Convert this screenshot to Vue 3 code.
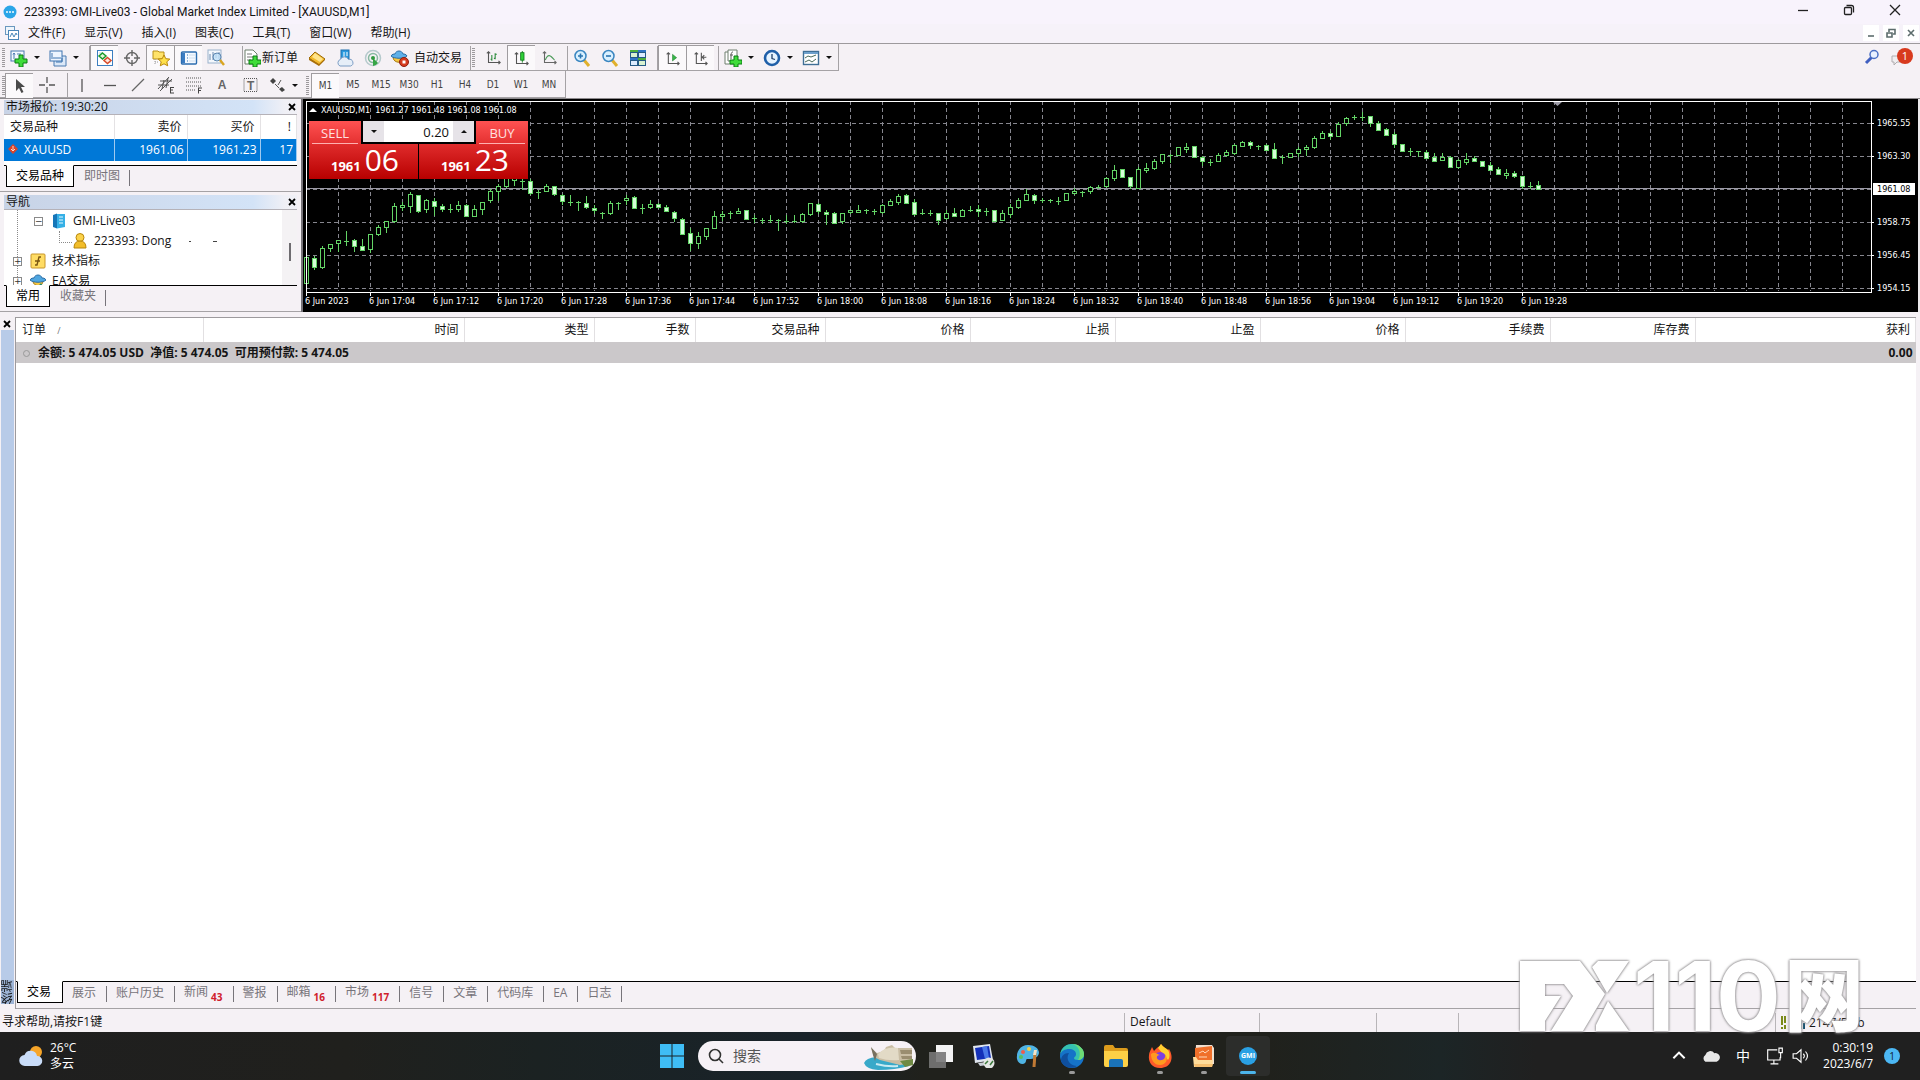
<script setup>
const icons = {
  newChart: '<rect x="1" y="2" width="13" height="10" fill="#f4f8ff" stroke="#4a7ab0"/><path d="M4 4v6M3 5.500l1-1.500 1 1.500M7 5h4" stroke="#4a7ab0" fill="none"/><path d="M9 6h4v4h4v4h-4v4H9v-4H5v-4h4z" fill="#3fdc3a" stroke="#0b7d12"/>',
  profiles: '<path d="M5 7h12v10H5z" fill="#dbe8f8" stroke="#4a7ab0"/><rect x="1" y="2" width="12" height="10" fill="#eef5ff" stroke="#3f74b0"/><path d="M2 9h10M3 4v4M7 13h6v-4" stroke="#3f74b0" fill="none"/>',
  market: '<rect x="1.500" y="1.500" width="15" height="15" fill="#fff" stroke="#3c7fc0"/><path d="M3 4h3M11 13h4" stroke="#b7cfe6"/><path d="M6.500 4l3.500 3-3.500 3L3 7z" fill="#dff5d8" stroke="#1c9a2a" stroke-width="1.500"/><path d="M11.500 8.500l3.500 3-3.500 3-3.500-3z" fill="#ffe6dc" stroke="#d84a2a" stroke-width="1.500"/>',
  crosshair: '<circle cx="9" cy="9" r="5.500" fill="none" stroke="#666" stroke-width="1.400"/><path d="M9 1v6M9 11v6M1 9h6M11 9h6" stroke="#666" stroke-width="1.400"/>',
  favorites: '<path d="M1 4V2h5l1 1h5v7H1z" fill="#ffe36a" stroke="#b8901a"/><path d="M3 10v6M3 13h4" stroke="#9a9a9a" stroke-dasharray="1 1"/><path d="M12 6l1.800 3.700 4 .4-3 2.700.9 4-3.700-2-3.700 2 .9-4-3-2.700 4-.4z" fill="#ffe14a" stroke="#b8860b"/>',
  navigator: '<rect x="1.500" y="3" width="15" height="12" rx="1" fill="#f4f9ff" stroke="#2c6db0" stroke-width="1.400"/><path d="M2 4h3v10H2z" fill="#3a7cc2"/><path d="M7 6h1M7 9h1M7 12h1" stroke="#2c6db0"/><path d="M9 6h6M9 9h6M9 12h6" stroke="#cfe0f0"/>',
  tester: '<rect x="1" y="1" width="13" height="13" fill="#f4f8fd" stroke="#9ab2cc"/><path d="M3 11V5M6 11V3M9 9V4M12 10V3" stroke="#6f8db0"/><circle cx="10" cy="8" r="4" fill="#bfe0f7" fill-opacity=".8" stroke="#5c86b0"/><path d="M13 11l4 5" stroke="#d9a520" stroke-width="2.400"/>',
  order: '<path d="M2 1h8l4 4v10H2z" fill="#fff" stroke="#6b7f6b"/><path d="M4 5h5M4 8h6M4 11h4" stroke="#777"/><path d="M10 7h4v4h4v4h-4v3h-4v-3H6v-4h4z" fill="#3fdc3a" stroke="#0b7d12"/>',
  gold: '<path d="M1 9L7 3l10 7-6 6z" fill="#f2b92d" stroke="#9a6a08"/><path d="M1 9v2l10 6 6-6v-1l-6 5z" fill="#a96f0a"/><path d="M7 4l8 6-3 3-8-5z" fill="#ffe48a"/>',
  cloud: '<rect x="5" y="1" width="8" height="9" fill="#2a9be0" stroke="#1f6fae"/><path d="M8 3v5M10 4h2M10 6h2" stroke="#fff"/><path d="M4 17a3.500 3.500 0 01.3-6.500 4.500 4.500 0 018.200 0A3.300 3.300 0 0114.500 17z" fill="#e6eef8" stroke="#7b9cc4"/>',
  signal: '<circle cx="9" cy="9" r="7.500" fill="none" stroke="#b5c9cc" stroke-width="1.500"/><circle cx="9" cy="9" r="4.500" fill="none" stroke="#86b8a0" stroke-width="1.500"/><path d="M9 9v8a8 8 0 005-3z" fill="#35a545"/><circle cx="9" cy="9" r="2" fill="#2f9a3f"/>',
  autotrade: '<path d="M2 8c0 7 12 7 12 0z" fill="#f6c742" stroke="#a87b14"/><path d="M0 7c3 3 13 3 16 0-1-2-3-2-4-2-1-4-7-4-8 0-1 0-3 0-4 2z" fill="#5fb0e8" stroke="#2a6da6"/><circle cx="13" cy="13" r="4.500" fill="#d63a1e" stroke="#8e1f10"/><rect x="11.500" y="11.500" width="3" height="3" fill="#fff"/>',
  bars: '<path d="M3 2v13h14M1 4l2-2 2 2M15 13l2 2-2 2" fill="none" stroke="#555" stroke-width="1.300"/><path d="M7 6v7M5.500 11H7M11 4v7M11 5h2M9.500 10H11" stroke="#2a8a3a" stroke-width="1.300"/>',
  candles: '<path d="M3 2v13h14M1 4l2-2 2 2M15 13l2 2-2 2" fill="none" stroke="#555" stroke-width="1.300"/><path d="M10 0v14" stroke="#0d7a18"/><rect x="8" y="2" width="4" height="9" fill="#2fd037" stroke="#0d7a18"/>',
  line: '<path d="M3 2v13h14M1 4l2-2 2 2M15 13l2 2-2 2" fill="none" stroke="#666" stroke-width="1.300"/><path d="M4 12c3-8 6-6 11 0" fill="none" stroke="#4a9a58" stroke-width="1.300"/>',
  zoomIn: '<path d="M11 11l5 6" stroke="#e0b02c" stroke-width="3"/><circle cx="7.500" cy="7" r="5.500" fill="#d9f0ff" stroke="#3a86c0" stroke-width="1.500"/><path d="M5 7h5M7.500 4.500v5" stroke="#2a74b0" stroke-width="1.600"/>',
  zoomOut: '<path d="M11 11l5 6" stroke="#e0b02c" stroke-width="3"/><circle cx="7.500" cy="7" r="5.500" fill="#d9f0ff" stroke="#3a86c0" stroke-width="1.500"/><path d="M5 7h5" stroke="#2a74b0" stroke-width="1.600"/>',
  tiles: '<path d="M1 1h16v16H1z" fill="#245a86"/><path d="M2 4h6v4H2zM10 12h6v4h-6z" fill="#d9f2d0"/><path d="M10 4h6v4h-6zM2 12h6v4H2z" fill="#dcecff"/><path d="M1 1h8v2H1zM9 9h8v2H9z" fill="#4cae3c"/><path d="M9 1h8v2H9zM1 9h8v2H1z" fill="#2f74c4"/>',
  autoscroll: '<path d="M4 2v13h13M2 4l2-2 2 2M15 13l2 2-2 2" fill="none" stroke="#555" stroke-width="1.300"/><path d="M9 4l5 4-5 4z" fill="#37b648" stroke="#1c7a2a" stroke-width=".6"/>',
  shift: '<path d="M4 2v13h13M2 4l2-2 2 2M15 13l2 2-2 2" fill="none" stroke="#555" stroke-width="1.300"/><path d="M10 2v10M16 7.500h-5M13.500 5l-2.500 2.500 2.500 2.500" fill="none" stroke="#555" stroke-width="1.300"/>',
  indicators: '<path d="M1 3h10v12H1z" fill="#fff" stroke="#6f7f6f"/><path d="M4 1h9v11H4z" fill="#fff" stroke="#6f7f6f"/><path d="M9 3c-2 0-2 2-2 7M6 6h3" stroke="#555" fill="none"/><path d="M10 7h4v4h4v4h-4v3h-4v-3H6v-4h4z" fill="#3fdc3a" stroke="#0b7d12"/>',
  clock: '<circle cx="9" cy="9" r="7" fill="#e6f3ff" stroke="#1f5fa8" stroke-width="2.600"/><path d="M9 5v4.500l3 1" fill="none" stroke="#1f3f68" stroke-width="1.300"/>',
  template: '<rect x="1.500" y="2.500" width="15" height="13" fill="#fff" stroke="#3f6f96" stroke-width="1.400"/><path d="M2 4h14" stroke="#6ea0cc" stroke-width="2"/><path d="M3 9l3-2 3 1 5-2M3 13l4-2 3 2 4-3" fill="none" stroke="#4a6a5a"/>',
  cursor: '<path d="M5 2v12l3-3 2.500 5 2-1-2.500-5h4z" fill="#4a4a4a"/>',
  cross: '<path d="M9 1v6M9 11v6M1 9h6M11 9h6" stroke="#555" stroke-width="1.300"/>',
  vline: '<path d="M9 3v13" stroke="#555" stroke-width="1.300"/>',
  hline: '<path d="M3 9.500h12" stroke="#555" stroke-width="1.300"/>',
  trend: '<path d="M3 15L15 3" stroke="#666" stroke-width="1.300"/>',
  channel: '<path d="M1 13L12 1M3 15L15 3M1 9h11M3 5h12M5 13l2-9M9 12l2-10" stroke="#555"/><path d="M13 11.500h4M13 14h3M13 17h4M13.500 11v6" stroke="#444"/>',
  fibo: '<path d="M1 2h15M1 6h15M1 10h15M1 14h9" stroke="#555" stroke-dasharray="1 1"/><path d="M13 12h4M13 14.500h3M13.500 12v5.500" stroke="#444"/>',
  labelBox: '<rect x="3" y="2.500" width="13" height="13" fill="none" stroke="#555" stroke-dasharray="1 1"/>',
  arrows: '<path d="M1 5l3-3 3 3-3 3z" fill="#444"/><path d="M6 8l4 4M12 4L9 9" stroke="#555"/><path d="M10 13l3-2 3 3-3 2z" fill="#444"/>',
}

const tools1 = [
  { icon: 'newChart', drop: true, t: '新图表' }, { icon: 'profiles', drop: true, t: '配置文件' }, { sep: 4 },
  { icon: 'market', on: true, t: '市场报价' }, { icon: 'crosshair', t: '数据窗口' }, { icon: 'favorites', on: true, t: '导航' },
  { icon: 'navigator', on: true, t: '终端' }, { icon: 'tester', t: '策略测试' }, { sep: 3 },
  { icon: 'order', label: '新订单', t: '新订单' }, { icon: 'gold', t: 'MetaEditor' }, { icon: 'cloud', t: '虚拟主机' }, { icon: 'signal', t: '信号' },
  { icon: 'autotrade', label: '自动交易', wide: true, t: '自动交易' }, { sep: 2 }, { grip: true },
  { icon: 'bars', small: true, t: '柱状图' }, { icon: 'candles', small: true, on: true, t: '阴阳烛' }, { icon: 'line', small: true, t: '折线图' }, { sep: 1 },
  { icon: 'zoomIn', t: '放大' }, { icon: 'zoomOut', t: '缩小' }, { icon: 'tiles', t: '平铺' }, { sep: 2 },
  { icon: 'autoscroll', small: true, on: true, t: '自动滚动' }, { icon: 'shift', small: true, on: true, t: '图表平移' }, { sep: 1 },
  { icon: 'indicators', drop: true, t: '指标' }, { icon: 'clock', drop: true, t: '周期' }, { icon: 'template', drop: true, t: '模板' },
]
const tools2 = [
  { icon: 'cursor', on: true, t: '光标' }, { icon: 'cross', t: '十字线' }, { sep: 4 },
  { icon: 'vline', t: '垂直线' }, { icon: 'hline', t: '水平线' }, { icon: 'trend', t: '趋势线' }, { icon: 'channel', t: '通道' },
  { icon: 'fibo', t: '斐波那契' }, { text: 'A', t: '文字' }, { icon: 'labelBox', text: 'T', t: '文字标签' }, { icon: 'arrows', drop: true, t: '箭头' }, { grip: true },
]
const frames = ['M1', 'M5', 'M15', 'M30', 'H1', 'H4', 'D1', 'W1', 'MN']
const menus = ['文件(F)', '显示(V)', '插入(I)', '图表(C)', '工具(T)', '窗口(W)', '帮助(H)']

const prices = ['1965.55', '1963.30', '', '1958.75', '1956.45', '1954.15']
const times = ['2023', '17:04', '17:12', '17:20', '17:28', '17:36', '17:44', '17:52', '18:00', '18:08', '18:16', '18:24', '18:32', '18:40', '18:48', '18:56', '19:04', '19:12', '19:20', '19:28']

// kind, body top, body bottom, high, low - in thirds of a pixel
const series = `h478,555,478,563 f481,508,475,515 h451,508,445,512 h439,451,439,463 h427,436,427,463 d428,428,398,443 f427,443,422,463 f445,457,422,460 h409,454,409,466 h388,409,382,415
h370,388,370,405 h325,370,314,376 h322,328,312,340 h287,323,283,346 f290,338,290,346 h307,334,302,346 f308,325,300,355 f325,333,317,342 d334,334,317,345 h322,334,308,342
f322,355,317,358 h334,355,322,358 h313,334,313,350 h280,307,272,315 h265,280,258,308 h240,265,230,270 h220,245,215,263 d248,248,240,275 f250,284,244,290 d281,281,276,303
h265,279,258,281 f265,289,263,293 f290,310,287,320 d312,312,290,323 d313,313,308,338 f316,328,294,332 f331,337,322,349 d344,344,342,362 h316,346,308,352 d315,315,312,335
h300,307,292,322 f298,331,295,334 d329,329,319,347 h319,328,307,332 f319,327,315,332 f328,340,322,342 f343,360,340,373 f362,407,360,412 f406,436,390,460 h415,436,402,454
h391,415,391,427 h355,391,338,392 h349,355,338,370 d346,346,338,364 h338,346,331,348 f337,362,335,364 d360,360,352,375 d366,366,360,378 d367,367,350,375 d367,367,362,398
d369,369,352,378 d370,370,350,375 h349,370,346,374 h316,349,316,353 f317,340,314,347 f342,349,337,381 f346,374,343,377 h346,370,346,377 h337,343,335,348 h335,341,322,346
d337,337,334,348 d340,340,334,350 h322,341,317,349 h310,322,302,324 h295,313,287,320 f292,314,288,318 f313,347,302,353 d345,345,332,352 d346,346,336,354 f346,365,344,380
h346,361,336,366 f346,353,330,354 h337,355,332,357 d337,337,324,342 f332,338,320,358 d339,339,330,354 f337,368,337,368 h346,367,335,368 h328,349,318,361 h307,328,300,333
h289,307,273,308 f290,305,288,318 d305,305,300,315 d307,307,302,315 d308,308,297,320 h286,305,284,308 h280,286,270,292 d282,282,280,297 h268,280,264,289 d268,268,262,274
h241,265,236,270 h217,241,200,250 f214,238,212,240 f238,265,236,274 h214,269,206,272 h211,216,195,224 h190,211,182,215 h169,190,169,197 d171,171,169,195 h148,170,146,175
h146,152,134,165 f145,178,143,180 f176,190,174,203 d191,191,183,204 h172,190,166,193 h163,170,155,177 h142,166,138,172 h133,143,130,146 f133,142,130,152 d143,143,142,155
f142,155,138,158 f154,179,134,182 d178,178,172,198 h166,178,166,180 h154,166,148,177 h146,154,142,175 h121,146,115,154 h106,121,100,123 f106,115,100,125 h77,113,73,116
h61,76,57,83 d57,57,50,66 d56,56,42,68 f55,76,55,86 f76,95,70,99 f94,112,90,114 f109,139,102,150 f139,158,137,160 d160,160,150,175 d160,160,158,176
f163,179,157,183 f178,188,166,190 h178,185,166,187 f177,206,175,208 h187,208,183,214 h182,191,166,201 f181,188,175,192 f190,203,190,206 f202,217,193,220 f214,229,206,232
h226,231,214,243 f226,235,220,239 f235,265,233,272 d263,263,252,272 f262,272,250,274`
const candles = series.split(/\s+/).map((s, i) => {
  const [t, b, h, l] = s.slice(1).split(',').map((v) => Math.round(v / 3))
  return { kind: s[0], x: 3 + i * 8, t, b: Math.max(b, t + 1), h, l }
})
const gridX = Array.from({ length: 48 }, (_, i) => 35 + i * 32)
const gridY = [25, 58, 91, 124, 157, 190]

const columns = [
  ['时间', 261], ['类型', 130], ['手数', 101], ['交易品种', 130], ['价格', 145], ['止损', 145],
  ['止盈', 145], ['价格', 145], ['手续费', 145], ['库存费', 145], ['获利', null],
]
const tabs = [
  ['交易'], ['展示'], ['账户历史'], ['新闻', 43], ['警报'], ['邮箱', 16], ['市场', 117], ['信号'], ['文章'], ['代码库'], ['EA'], ['日志'],
]

const apps = [
  { name: '任务视图', art: '<rect x="7" y="1" width="17" height="17" fill="#fff" fill-opacity=".95"/><rect x="0" y="8" width="17" height="16" fill="#777" fill-opacity=".9"/>' },
  { name: '远程桌面', art: '<path d="M1 2l17-2 3 16-18 3z" fill="#dfe5ee"/><path d="M3 4l14-2 2 12-14 2z" fill="#1430b8"/><path d="M10 3l5-1 2 12-4 1z" fill="#4a78e8"/><path d="M6 19l9-1 1 3-8 1z" fill="#c9ced6"/><circle cx="17" cy="19" r="5.500" fill="#e4e6e4"/><path d="M13 20l3-3M21 17l-3 4" stroke="#3c7a3c" stroke-width="1.500"/>' },
  { name: '画图', art: '<path d="M12 1C4 1 0 8 1 15c1 5 6 6 8 4 2-2 0-4 3-4s10 0 11-6c0-5-5-8-11-8z" fill="#4fb4e4"/><circle cx="7" cy="8" r="2" fill="#f05a4a"/><circle cx="13" cy="5" r="2" fill="#f7cf46"/><circle cx="5" cy="13" r="2" fill="#58c05a"/><path d="M19 9l-1 14" stroke="#c07a34" stroke-width="3"/><path d="M18 6l3 0-1 5h-3z" fill="#f2e3c8"/>' },
  { name: 'Edge', dot: true, art: '<circle cx="12" cy="12" r="12" fill="#1573c8"/><path d="M0 11C1 3 7 0 12 0c7 0 12 5 12 10 0 4-3 6-6 6-3 0-4-1-4-2s2-1 2-4c0-3-3-5-7-5-4 0-8 2-9 6z" fill="#35c1b0"/><path d="M12 0c7 0 12 5 12 10 0 4-3 6-6 6 3-4 3-14-6-16z" fill="#6edb74"/><path d="M9 9c-4 6 1 13 8 13-6 4-14 1-16-5 0-5 3-8 8-8z" fill="#0f4f9e"/>' },
  { name: '文件资源管理器', art: '<path d="M0 3q0-2 2-2h7l2 3h11q2 0 2 2v4H0z" fill="#dd9c1c"/><path d="M0 7h24v14q0 2-2 2H2q-2 0-2-2z" fill="#fdd046"/><path d="M5 23v-6q0-2 2-2h10q2 0 2 2v6z" fill="#1a73b8"/>' },
  { name: 'Firefox', dot: true, art: '<path d="M12 24C4 24 0 18 1 11c0-3 2-5 3-8l2 4c2-2 3-4 6-5l1-2c2 3 5 4 7 6l1-1c3 5 3 9 2 12-2 5-6 7-11 7z" fill="#ff5a2a"/><path d="M13 0c2 3 5 4 7 6 2 3 2 8 0 10L10 4z" fill="#ffcf2f"/><circle cx="12" cy="14" r="6" fill="#7b3fe0"/><path d="M3 10c4-3 6 0 9 1-4 0-4 4-1 5 4 1 7-2 6-6 4 5 1 11-5 11S3 16 3 10z" fill="#ff9a1f"/>' },
  { name: '文档', dot: true, art: '<path d="M4 1h16l2 3v16H3z" fill="#f0e0d0"/><path d="M3 4l17-2v16H3z" fill="#f0702a"/><path d="M7 9l4-2 2 2 4-3M7 13h8" stroke="#ffd8b8" fill="none"/><path d="M1 13h3l2 3h15l-1 7H2z" fill="#ffdc9a"/><path d="M2 20h19l-1 3H3z" fill="#f7c070"/>' },
]
</script>

<template>
  <div class="desk">
    <header class="title">
      <svg class="logo" viewBox="0 0 14 14"><circle cx="7" cy="7" r="6.500" fill="#2aa5e8" /><path d="M3 7h8" stroke="#bfe6fa" stroke-width="2" stroke-dasharray="2 1" /></svg>
      <h1>223393: GMI-Live03 - Global Market Index Limited - [XAUUSD,M1]</h1>
      <div class="win">
        <button aria-label="最小化"><svg viewBox="0 0 12 12"><path d="M1 6.500h10" /></svg></button>
        <button aria-label="还原"><svg viewBox="0 0 12 12"><rect x="1.500" y="3.500" width="7" height="7" rx="1" /><path d="M3.500 1.500h5q2 0 2 2v5" /></svg></button>
        <button aria-label="关闭"><svg viewBox="0 0 12 12"><path d="M1 1l10 10M11 1L1 11" /></svg></button>
      </div>
    </header>

    <nav class="menu">
      <svg class="logo" viewBox="0 0 14 14"><rect x=".5" y=".5" width="9" height="8" fill="#eef5fc" stroke="#6a97bf" /><rect x="3.500" y="4.500" width="10" height="9" fill="#fff" stroke="#4a86b8" /><path d="M5 11l2-4 2 4 2-4 1 2" fill="none" stroke="#4a86b8" /></svg>
      <button v-for="m in menus" :key="m">{{ m }}</button>
      <div class="mdi">
        <button aria-label="最小化图表"><svg viewBox="0 0 10 10"><path d="M2 8h6" /></svg></button>
        <button aria-label="还原图表"><svg viewBox="0 0 10 10"><path d="M1 5h5v4H1zM3 4V1.500h6V6H7" /></svg></button>
        <button aria-label="关闭图表"><svg viewBox="0 0 10 10"><path d="M2 2l6 6M8 2L2 8" /></svg></button>
      </div>
    </nav>

    <div class="bars">
      <div class="bar">
        <i class="grip"></i>
        <template v-for="(b, i) in tools1" :key="i">
          <i v-if="b.grip" class="grip"></i>
          <i v-else-if="b.sep" class="sep" :class="'s' + b.sep"></i>
          <button v-else class="tool" :class="{ on: b.on, drop: b.drop, label: b.label, wide: b.wide, small: b.small }" :aria-label="b.t">
            <svg viewBox="0 0 18 18" v-html="icons[b.icon]"></svg><span v-if="b.label">{{ b.label }}</span><i v-if="b.drop" class="caret"></i>
          </button>
        </template>
      </div>
      <div class="bar second">
        <i class="grip"></i>
        <template v-for="(b, i) in tools2" :key="i">
          <i v-if="b.grip" class="grip inner"></i>
          <i v-else-if="b.sep" class="sep" :class="'s' + b.sep"></i>
          <button v-else class="tool" :class="{ on: b.on, drop: b.drop }" :aria-label="b.t">
            <svg v-if="b.icon" viewBox="0 0 18 18" v-html="icons[b.icon]"></svg><b v-if="b.text" :class="{ over: b.icon }">{{ b.text }}</b><i v-if="b.drop" class="caret"></i>
          </button>
        </template>
        <button v-for="(f, i) in frames" :key="f" class="tool frame" :class="{ on: i === 0 }">{{ f }}</button>
      </div>
      <div class="corner">
        <svg viewBox="0 0 16 16"><path d="M8 8l-6 6" stroke="#3f5fc0" stroke-width="3" /><circle cx="10" cy="5.500" r="4" fill="#e9f1ff" stroke="#4a6fc4" stroke-width="1.500" /></svg>
        <span class="chat"><svg viewBox="0 0 16 16"><path d="M1 7h9v6H6l-3 3v-3H1z" fill="#f0eef0" stroke="#b0adb0" /></svg><em>1</em></span>
      </div>
    </div>

    <main class="work">
      <aside class="side">
        <section class="panel quotes">
          <h2>市场报价: 19:30:20 <button aria-label="关闭市场报价"><svg viewBox="0 0 8 8"><path d="M1 1l6 6M7 1L1 7" /></svg></button></h2>
          <table>
            <colgroup><col style="width: 110px"><col style="width: 73px"><col style="width: 73px"><col></colgroup>
            <thead><tr><th>交易品种</th><th>卖价</th><th>买价</th><th>!</th></tr></thead>
            <tbody><tr><td><svg viewBox="0 0 10 10"><path d="M5 0l5 5-5 5-5-5z" fill="#d8442a" /><path d="M5 2v5M3 5l2 2 2-2" stroke="#ffd8c8" fill="none" /></svg>XAUUSD</td><td>1961.06</td><td>1961.23</td><td>17</td></tr></tbody>
          </table>
          <div class="tabs"><button class="active">交易品种</button><button>即时图</button></div>
        </section>
        <section class="panel navi">
          <h2>导航 <button aria-label="关闭导航"><svg viewBox="0 0 8 8"><path d="M1 1l6 6M7 1L1 7" /></svg></button></h2>
          <div class="treebox">
            <ul class="tree">
              <li class="l2"><i class="exp">−</i><svg viewBox="0 0 16 16"><path d="M2 2l4-1.500v15L2 14z" fill="#1676b8" /><path d="M6 1h8v13l-8 1.500z" fill="#35b0e6" /><path d="M8 4h4M8 7h4M8 10h4" stroke="#e4f6ff" /></svg>GMI-Live03</li>
              <li class="l3"><svg viewBox="0 0 16 16"><circle cx="8" cy="4.500" r="4" fill="#fbd24a" stroke="#b8860b" /><path d="M2 15q0-7 6-7t6 7z" fill="#f2bd2a" stroke="#b8860b" /></svg>223393: Dong<i class="speck"></i><i class="speck low"></i></li>
              <li class="l1"><i class="exp">+</i><svg viewBox="0 0 16 16"><rect x="1" y="1" width="14" height="14" rx="1" fill="#ffdc64" stroke="#c8962a" /><path d="M11 4H9L7 12H5M5 8h5" fill="none" stroke="#7a5510" stroke-width="1.400" /></svg>技术指标</li>
              <li class="l1"><i class="exp">+</i><svg viewBox="0 0 16 16"><path d="M3 8c0 6 10 6 10 0z" fill="#f6c742" stroke="#a87b14" /><path d="M0 7c3 3 13 3 16 0-1-2-3-2-4-2-1-4-7-4-8 0-1 0-3 0-4 2z" fill="#4fa6e0" stroke="#2a6da6" /><path d="M10 11l4 4" stroke="#2a8a6a" stroke-width="2" /></svg>EA交易</li>
            </ul>
            <div class="scroll"><i></i></div>
          </div>
          <div class="tabs"><button class="active">常用</button><button>收藏夹</button></div>
        </section>
      </aside>

      <section class="chart">
        <div class="plot">
          <svg class="canvas">
            <g stroke="#86868e" stroke-dasharray="4 3" shape-rendering="crispEdges">
              <line v-for="x in gridX" :key="x" :x1="x + 0.5" y1="3" :x2="x + 0.5" y2="193" />
              <line v-for="y in gridY" :key="y" x1="3" :y1="y + 0.5" x2="100%" :y2="y + 0.5" />
            </g>
            <path d="M3 90.500H4000" stroke="#9c9aa6" shape-rendering="crispEdges" />
            <g stroke="#63d466" shape-rendering="crispEdges">
              <template v-for="c in candles" :key="c.x">
                <line :x1="c.x + 0.5" :y1="c.h" :x2="c.x + 0.5" :y2="c.l" />
                <rect v-if="c.kind !== 'd'" :x="c.x - 1.5" :y="c.t + 0.5" width="4" :height="c.b - c.t" :fill="c.kind === 'f' ? '#d6ffd8' : '#000'" />
                <line v-else :x1="c.x - 2" :y1="c.t + 0.5" :x2="c.x + 3" :y2="c.t + 0.5" />
              </template>
            </g>
            <path d="M1250 4h9l-4.500 4z" fill="#9c9aa6" />
          </svg>
          <p class="ohlc"><i></i>XAUUSD,M1&nbsp; 1961.27 1961.48 1961.08 1961.08</p>
          <div class="deal">
            <button class="act sell">SELL</button>
            <div class="lots">
              <button aria-label="减少"><i class="caret"></i></button><input value="0.20" aria-label="手数"><button aria-label="增加"><i class="caret up"></i></button>
            </div>
            <button class="act buy">BUY</button>
            <button class="quote"><b>1961</b><span>06</span></button>
            <button class="quote"><b>1961</b><span>23</span></button>
          </div>
        </div>
        <div class="scale">
          <span v-for="(p, i) in prices" :key="i" :class="{ now: !p }">{{ p || '1961.08' }}</span>
        </div>
        <div class="times"><span v-for="t in times" :key="t">6 Jun {{ t }}</span></div>
      </section>
    </main>

    <section class="terminal">
      <div class="rail">
        <button aria-label="关闭终端"><svg viewBox="0 0 8 8"><path d="M1 1l6 6M7 1L1 7" /></svg></button>
        <span>终端</span>
      </div>
      <div class="book">
        <table>
          <colgroup><col style="width: 187px"><col v-for="(c, i) in columns" :key="i" :style="{ width: c[1] ? c[1] + 'px' : 'auto' }"></colgroup>
          <thead><tr><th>订单 <small>/</small></th><th v-for="(c, i) in columns" :key="i">{{ c[0] }}</th></tr></thead>
          <tbody><tr><td colspan="11"><i></i>余额: 5 474.05 USD&nbsp; 净值: 5 474.05&nbsp; 可用预付款: 5 474.05</td><td>0.00</td></tr></tbody>
        </table>
        <div class="tabs"><button v-for="(t, i) in tabs" :key="t[0]" :class="{ active: i === 0 }">{{ t[0] }}<sub v-if="t[1]">{{ t[1] }}</sub></button></div>
      </div>
    </section>

    <footer class="status">
      <span class="help">寻求帮助,请按F1键</span><span class="c1">Default</span><span class="c2"></span><span class="c3"></span><span class="c4"></span>
      <span class="net"><svg viewBox="0 0 26 14"><path d="M1 0v9M1 11v2M4 0v7M4 9v4" stroke="#7a8a1a" stroke-width="2" /><path d="M17 2v11M20 5v8M23 7v6" stroke="#14506e" stroke-width="2" /></svg>2147/5 kb</span>
    </footer>

    <footer class="task">
      <div class="weather">
        <svg viewBox="0 0 24 22"><circle cx="17" cy="7" r="6" fill="#f7a529" /><path d="M6 21a5.500 5.500 0 01-.5-11A6.500 6.500 0 0118 11a5 5 0 01.5 10z" fill="#c9dcf8" /></svg>
        <p>26°C<br>多云</p>
      </div>
      <div class="center">
        <button class="start" aria-label="开始"><svg viewBox="0 0 24 24"><path d="M0 0h11.500v11.500H0zM12.500 0H24v11.500H12.500zM0 12.500h11.500V24H0zM12.500 12.500H24V24H12.500z" fill="#3fbdf5" /></svg></button>
        <label class="search">
          <svg viewBox="0 0 16 16"><circle cx="7" cy="7" r="5.500" /><path d="M11 11l4 4" /></svg>
          <input placeholder="搜索" aria-label="搜索">
          <svg class="fish" viewBox="0 0 50 28"><path d="M0 21q2-5 12-6l24 4 9 5q-14 4-31 4-12-1-14-7z" fill="#38a9c9" /><path d="M7 6l6 5q8-2 9-6l6-2 3 3h17v15l-12 2-20-5-6-3z" fill="#c9bda4" /><path d="M14 12q8-8 20-6l1 12q-11 1-20-2z" fill="#e2dac6" /><path d="M7 5l6 7-2 7-2-6z" fill="#77705f" /><path d="M36 8h12v4H37zM37 14h11v3H38z" fill="#9a8d70" /><path d="M36 19l13-2v6l-8 2z" fill="#6f8a44" /><path d="M12 22q12 3 22 2" stroke="#c9eaf2" stroke-width="2" fill="none" /></svg>
        </label>
        <button v-for="a in apps" :key="a.name" class="app" :aria-label="a.name"><svg viewBox="0 0 24 24" v-html="a.art"></svg><i v-if="a.dot"></i></button>
        <button class="app current" aria-label="GMI"><svg viewBox="0 0 24 24"><circle cx="12" cy="12" r="9" fill="#2aa0e4" /></svg><b>GMI</b><i></i></button>
      </div>
      <div class="tray">
        <button aria-label="显示隐藏的图标"><svg viewBox="0 0 16 16"><path d="M3 10l5-5 5 5" stroke-width="1.800" /></svg></button>
        <button aria-label="OneDrive"><svg viewBox="0 0 16 16"><path d="M3 13a3.500 3.500 0 010-6 4.500 4.500 0 018-1.500A3.800 3.800 0 0113 13z" fill="#e8e8e8" stroke="none" /></svg></button>
        <button class="ime">中</button>
        <button aria-label="网络"><svg viewBox="0 0 16 16"><path d="M10 2.500H1.500v9h11V9M4 15h7M7 12v3M11.500 1h3v4h-3zM13 5v5" /></svg></button>
        <button class="vol" aria-label="音量"><svg viewBox="0 0 16 16"><path d="M1 6h3l4-3.500v11L4 10H1zM10 6q2 2 0 4M12 4q3.500 4 0 8" /></svg></button>
        <time>0:30:19<br>2023/6/7</time>
        <em>1</em>
      </div>
    </footer>

    <div class="mark">
      <svg viewBox="0 0 112 74"><path d="M2 2h60l25 33-22 37H33l22-35-9-12H27v12h16L27 62v10H2zM80 2h31L89 34 74 8zM90 42l21 30H78v-6z" fill="#fff" /></svg>
      <span>110</span><span class="net-cn">网</span>
    </div>
  </div>
</template>

<style>
body { margin: 0; overflow: hidden; }
</style>

<style scoped>
* { box-sizing: border-box; }
.desk { --ui: "Open Sans", "Noto Sans CJK SC", sans-serif; display: flex; flex-direction: column; height: 100vh; position: relative; background: #f5f1f5; font: 12px/16px var(--ui); color: #151515; }
button { font: inherit; color: inherit; background: none; border: 0; padding: 0; margin: 0; }
h1, h2, p, ul { margin: 0; padding: 0; font: inherit; }
em, i { font-style: normal; }
svg { display: block; flex: none; }
table { border-collapse: collapse; table-layout: fixed; width: 100%; }
th { font-weight: 400; }
th, td { padding: 0; text-align: right; white-space: nowrap; }

.title { display: flex; align-items: center; height: 24px; padding-left: 3px; background: #f8f3fc; }
.title h1 { font-family: Roboto, sans-serif; }
.logo { width: 14px; height: 14px; margin-right: 7px; }
.win { margin: 0 2px 4px auto; display: flex; }
.win button { width: 46px; display: grid; place-items: center; }
.win svg { width: 12px; height: 12px; fill: none; stroke: #222; stroke-width: 1.3; }
.menu { display: flex; align-items: center; height: 20px; padding: 0 1px 1px 5px; border-bottom: 1px solid #9d9a9d; background: #f6f2f9; }
.menu .logo { margin-right: 0; }
.menu > button { padding: 0 10px 0 9px; }
.mdi { margin-left: auto; display: flex; gap: 4px; }
.mdi button { width: 16px; height: 16px; background: #fff; display: grid; place-items: center; }
.mdi svg { width: 10px; height: 10px; fill: none; stroke: #5c6c6c; stroke-width: 1.6; }

.bars { position: relative; display: flex; flex-direction: column; align-items: flex-start; height: 54px; }
.bar { display: flex; align-items: center; height: 27px; padding: 1px 2px 0 0; border-right: 1px solid #a5a2a5; border-bottom: 1px solid #a5a2a5; }
.bar.second { padding-top: 2px; }
.grip { width: 3px; height: 19px; margin: 0 0 0 2px; background: repeating-linear-gradient(#9c999c 0 1px, transparent 1px 2px); }
.sep + .grip { margin: 0 4px 0 1px; }
.grip.inner { margin: 0 2px 0 7px; }
.sep { width: 5px; height: 24px; border-right: 1px solid #a5a2a5; }
.s2 { width: 6px; }
.s3 { width: 13px; }
.s4 { width: 7px; }
.tool { position: relative; display: flex; align-items: center; justify-content: center; width: 28px; height: 25px; }
.tool svg { width: 18px; height: 18px; }
.tool.small svg { width: 15px; height: 15px; }
.tool.on { background: #fbf9fb; border-left: 1px solid #9f9c9f; border-top: 1px solid #9f9c9f; }
.tool.drop { width: 39px; justify-content: flex-start; padding-left: 5px; gap: 6px; }
.second .tool.drop { width: 35px; gap: 5px; }
.tool.label { width: 60px; gap: 1px; justify-content: flex-start; }
.tool.wide { width: 78px; padding-left: 4px; gap: 5px; }
.tool.label span { white-space: nowrap; }
.tool b { font: 700 12px/16px "Liberation Sans", sans-serif; color: #666; }
.tool b.over { position: absolute; left: 11px; top: 5px; }
.tool.frame { font: 10px/16px "DejaVu Sans Condensed", "DejaVu Sans", sans-serif; color: #444; }
.caret { width: 0; height: 0; border: 3px solid transparent; border-top-color: #111; border-bottom: 0; }
.caret.up { border-top: 0; border-bottom: 3px solid #111; }
.corner { position: absolute; right: 7px; top: 5px; display: flex; gap: 11px; }
.corner svg { width: 16px; height: 16px; }
.chat { position: relative; width: 22px; }
.chat em { position: absolute; right: 0; top: -1px; width: 16px; height: 16px; border-radius: 8px; background: #d83a1e; color: #fff; text-align: center; font-size: 11px; }

.work { display: flex; height: 214px; border-top: 1px solid #8d8a8d; }
.side { width: 303px; display: flex; flex-direction: column; gap: 1px; border-right: 2px solid #77747a; }
.panel { border-bottom: 1px solid #a5a2a5; padding: 1px 4px 0; }
.quotes { height: 93px; }
.navi { height: 119px; padding-top: 2px; }
.panel h2 { height: 15px; line-height: 14px; padding-left: 2px; display: flex; justify-content: space-between; background: linear-gradient(90deg, #c8d3e6, #d3e3f7 85%, #f0f0f6 96%); border-bottom: 1px solid #b5b2b8; }
.panel h2 button { width: 9px; }
.panel h2 svg, .rail svg { width: 8px; height: 8px; stroke: #000; stroke-width: 1.8; }
.quotes th { height: 24px; background: #fff; border-right: 1px solid #e4e2e4; padding-right: 5px; }
.quotes td { height: 22px; background: #0078d7; color: #fff; border-right: 1px solid #9fcaf0; padding-right: 3px; }
.quotes td:first-child { text-align: left; padding-left: 4px; }
.quotes th:first-child { text-align: left; padding-left: 6px; }
.quotes td svg { display: inline-block; width: 10px; height: 10px; margin-right: 6px; }
.tabs { display: flex; align-items: flex-start; border-top: 1px solid #000; height: 24px; padding-left: 2px; }
.tabs button { position: relative; color: #77747a; height: 20px; padding: 0 10px; }
.tabs button:not(.active)::after { content: ""; position: absolute; right: 0; top: 4px; height: 16px; border-right: 1px solid #77747a; }
.tabs .active { color: #000; height: 22px; margin-top: -1px; background: #fff; border: 1px solid #000; border-top-color: #fff; }
.quotes .tabs { margin-top: 4px; box-shadow: 0 -4px #fff; }
.quotes .active, .navi .active { padding: 0 9px; }
.treebox { display: flex; height: 75px; background: #fff; overflow: hidden; }
.tree { flex: 1; list-style: none; position: relative; padding-top: 1px; }
.tree::before { content: ""; position: absolute; left: 13px; top: 0; bottom: 0; border-left: 1px dotted #8a8a8a; }
.tree li { display: flex; align-items: center; height: 20px; position: relative; }
.tree svg { width: 16px; height: 16px; margin-right: 6px; }
.exp { width: 9px; height: 9px; border: 1px solid #8a8a8a; background: #fff; font: 9px/7px "DejaVu Sans", sans-serif; text-align: center; margin-right: 8px; color: #333; }
.l1 { padding-left: 9px; }
.l2 { padding-left: 30px; }
.l3 { padding-left: 68px; }
.l3::before { content: ""; position: absolute; left: 55px; top: 0; width: 12px; height: 11px; border: dotted #8a8a8a; border-width: 0 0 1px 1px; }
.speck { width: 2px; height: 1px; margin: 0 22px 0 18px; background: #444; }
.speck.low { width: 4px; margin-left: 0; }
.scroll { width: 15px; background: #f4f2f4; display: flex; justify-content: center; padding-top: 33px; }
.scroll i { width: 2px; height: 18px; background: #6e6c70; }

.chart { flex: 1; min-width: 0; display: grid; grid-template: 194px 1fr / 1fr 46px; background: #000; color: #fff; border-right: 2px solid #eceaec; font: 9px/12px "DejaVu Sans Condensed", "DejaVu Sans", sans-serif; }
.plot { position: relative; overflow: hidden; }
.plot::after { content: ""; position: absolute; inset: 2px 0 0 3px; border: 1px solid #fff; pointer-events: none; }
.canvas { position: absolute; left: 0; top: -1px; width: 100%; height: 195px; }
.ohlc { position: absolute; left: 6px; top: 5px; display: flex; align-items: center; white-space: pre; }
.ohlc i { border: 4px solid transparent; border-top: 0; border-bottom-color: #fff; margin-right: 4px; }
.deal { position: absolute; left: 6px; top: 22px; width: 219px; display: grid; grid-template: 23px 35px / 52px 57px 1px 57px 52px; font-family: var(--ui); background: #000; }
.act { background: linear-gradient(#ffb0b0, #ffb0b0) center bottom / 46px 1px no-repeat, linear-gradient(#ff5252, #e43030); color: #ffe0e0; font-size: 13px; display: grid; place-items: center; }
.lots { grid-column: 2 / 5; display: flex; margin: 0 2px 2px; background: #fff; font-size: 13px; }
.lots button { width: 21px; background: #e6e3e8; display: grid; place-items: center; }
.lots input { flex: 1; min-width: 0; border: 0; padding: 0 4px; text-align: right; font: inherit; color: #111; background: #fff; }
.quote { grid-row: 2; grid-column: 1 / 3; display: flex; align-items: baseline; justify-content: center; gap: 4px; padding-left: 3px; background: linear-gradient(#e02c2c, #b80000); color: #fff; }
.quote + .quote { grid-column: 4 / 6; }
.quote b { font-size: 13px; line-height: 16px; }
.quote span { font-size: 30px; line-height: 32px; }
.scale { padding-top: 18px; display: flex; flex-direction: column; }
.scale span { flex: none; height: 33px; padding-left: 5px; position: relative; }
.scale span:last-child { height: 12px; }
.scale span::before { content: ""; position: absolute; left: 0; top: 6px; width: 2px; height: 1px; background: #fff; }
.scale .now { height: 12px; margin: 0 3px 21px 1px; padding-left: 4px; background: #fff; color: #000; }
.times { grid-column: 1 / 3; display: flex; padding: 2px 0 0 2px; overflow: hidden; }
.times span { flex: none; width: 64px; position: relative; }
.times span::before { content: ""; position: absolute; left: 1px; top: -2px; width: 1px; height: 3px; background: #fff; }

.terminal { flex: 1; display: flex; min-height: 0; padding-top: 5px; }
.rail { width: 15px; display: flex; flex-direction: column; }
.rail button { height: 13px; padding-left: 3px; }
.rail span { flex: 1; writing-mode: vertical-rl; transform: rotate(180deg); margin: 0 1px 5px; background: linear-gradient(#9db4d6 24px, #b8cbe8 24px); line-height: 13px; }
.book { flex: 1; min-width: 0; display: flex; flex-direction: column; border: solid #9d9a9d; border-width: 1px 0 0 1px; margin-right: 4px; background: #fff; }
.book th { height: 24px; border-right: 1px solid #e2e0e2; padding-right: 5px; }
.book th:first-child { text-align: left; padding-left: 6px; }
.book th small { margin-left: 8px; font-size: 9px; color: #777; }
.book td { height: 21px; background: #cbc8ca; font-weight: 700; padding-right: 3px; }
.book td:first-child { text-align: left; padding-left: 7px; }
.book td i { display: inline-block; width: 7px; height: 7px; border: 1px solid #999; border-radius: 4px; margin-right: 8px; }
.book .tabs { margin-top: auto; height: 28px; padding-left: 1px; background: #f5f1f5; border-bottom: 1px solid #a5a2a5; }
.book .tabs button { height: 22px; padding: 0 11px 0 9px; }
.book .tabs sub { font-size: 10px; line-height: 10px; color: #d0202c; font-weight: 700; margin-left: 3px; vertical-align: -5px; }

.status { display: flex; height: 23px; padding-top: 4px; line-height: 18px; }
.status span { border-right: 1px solid #b8b5b8; padding-left: 5px; }
.status .help { flex: 1; padding-left: 2px; }
.status .c1 { width: 135px; }
.status .c2 { width: 117px; }
.status .c3 { width: 82px; }
.status .c4 { width: 317px; }
.status .net { width: 144px; border: 0; display: flex; align-items: center; gap: 2px; }
.net svg { width: 26px; height: 14px; }

.task { display: grid; grid-template-columns: 1fr 620px 1fr; align-items: center; height: 48px; background: linear-gradient(90deg, #1f1f1f, #20201d 18%, #1b2222 28%, #19232a 42%, #20211c 48%, #20211c 66%, #1c2526 75%, #202020 80%); color: #fff; }
.weather { display: flex; align-items: center; gap: 7px; padding-left: 19px; }
.weather svg { width: 24px; height: 22px; }
.center { display: flex; align-items: center; height: 48px; }
.start, .app { position: relative; width: 44px; height: 40px; display: grid; place-items: center; }
.start svg, .app svg { width: 24px; height: 24px; }
.search { display: flex; align-items: center; width: 218px; height: 30px; margin: 0 3px 0 4px; padding: 0 2px 0 10px; border-radius: 15px; background: #f6f1f6; overflow: hidden; }
.search svg { width: 16px; height: 16px; fill: none; stroke: #333; stroke-width: 1.6; }
.search .fish { width: 50px; height: 28px; stroke: none; }
.search input { flex: 1; min-width: 0; border: 0; padding: 0; margin-left: 9px; background: none; font: 14px/20px var(--ui); }
.search input::placeholder { color: #555; }
.app i { position: absolute; bottom: 2px; left: 19px; width: 6px; height: 3px; border-radius: 2px; background: #9a9a9a; }
.current { background: #2c2d2b; border-radius: 4px; }
.current b { position: absolute; left: 0; right: 0; top: 12px; font-size: 7px; text-align: center; }
.current i { left: 14px; width: 16px; background: #4cb4ea; }
.tray { display: flex; align-items: center; justify-content: flex-end; padding-right: 20px; }
.tray button { width: 32px; display: grid; place-items: center; font-size: 14px; }
.tray .vol { width: 20px; }
.tray svg { width: 18px; height: 18px; fill: none; stroke: #fff; }
.tray time { width: 62px; text-align: right; margin-right: 11px; }
.tray em { width: 16px; height: 16px; border-radius: 8px; background: #4cb8f5; color: #123; text-align: center; font-size: 10px; }

.mark { position: absolute; right: 56px; bottom: 47px; width: 346px; height: 74px; display: flex; align-items: center; justify-content: space-between; color: #fff; filter: drop-shadow(0 0 1px #8a888a) drop-shadow(0 0 1px #aaa8aa); pointer-events: none; font: 700 96px/74px Inter, sans-serif; }
.mark svg { width: 112px; height: 74px; }
.mark .net-cn { font: 900 80px/60px "Noto Sans CJK SC", sans-serif; padding-bottom: 14px; }
</style>
